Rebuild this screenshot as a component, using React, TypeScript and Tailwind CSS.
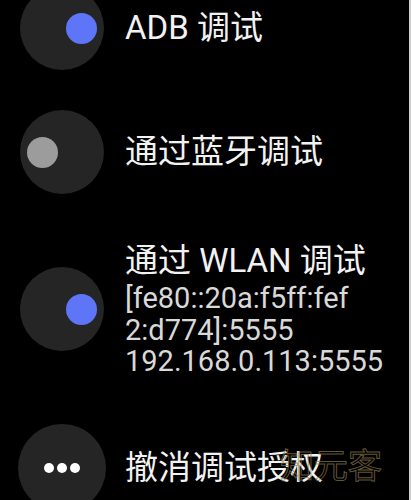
const font = "font-['Roboto','Noto_Sans_CJK_SC',sans-serif]";

function Knob({ on }: { on: boolean }) {
  return (
    <div className="w-[84px] h-[84px] shrink-0 rounded-full bg-[#252525] flex items-center px-[7px]">
      <div
        className={`w-[31px] h-[31px] rounded-full ${on ? "ml-auto bg-[#5d75f6]" : "bg-[#9c9c9c]"}`}
      />
    </div>
  );
}

export default function App() {
  return (
    <div className={`${font} relative w-[411px] h-[500px] overflow-hidden bg-black border-r-2 border-[#cfcfcf]`}>
      <div className="flex flex-col pl-[20px]">
        <div className="-mt-[14px] flex items-center gap-[21px]">
          <Knob on />
          <span className="text-[33px] leading-[40px] text-[#f2f2f2]">ADB 调试</span>
        </div>

        <div className="mt-[40px] flex items-center gap-[21px]">
          <Knob on={false} />
          <span className="text-[33px] leading-[40px] text-[#f2f2f2]">通过蓝牙调试</span>
        </div>

        <div className="mt-[47px] flex items-center gap-[21px]">
          <Knob on />
          <div className="flex flex-col">
            <span className="text-[33px] leading-[40px] text-[#f2f2f2]">通过 WLAN 调试</span>
            <div className="mt-[2px] text-[29px] leading-[31.5px] text-[#d9d9d9]">
              <div>[fe80::20a:f5ff:fef</div>
              <div>2:d774]:5555</div>
              <div>192.168.0.113:5555</div>
            </div>
          </div>
        </div>

        <div className="mt-[46px] flex items-center gap-[19px] -ml-[2px]">
          <div className="w-[88px] h-[88px] shrink-0 rounded-full bg-[#252525] flex items-center justify-center gap-[3px]">
            <span className="w-[10px] h-[10px] rounded-full bg-white" />
            <span className="w-[10px] h-[10px] rounded-full bg-white" />
            <span className="w-[10px] h-[10px] rounded-full bg-white" />
          </div>
          <span className="text-[33px] leading-[40px] text-[#f2f2f2]">撤消调试授权</span>
        </div>
      </div>

      <div
        className="absolute left-[280px] top-[446px] text-[34px] leading-[40px] text-transparent opacity-70"
        style={{ WebkitTextStroke: "1px #8c7a4e" }}
      >
        知元客
      </div>
    </div>
  );
}
